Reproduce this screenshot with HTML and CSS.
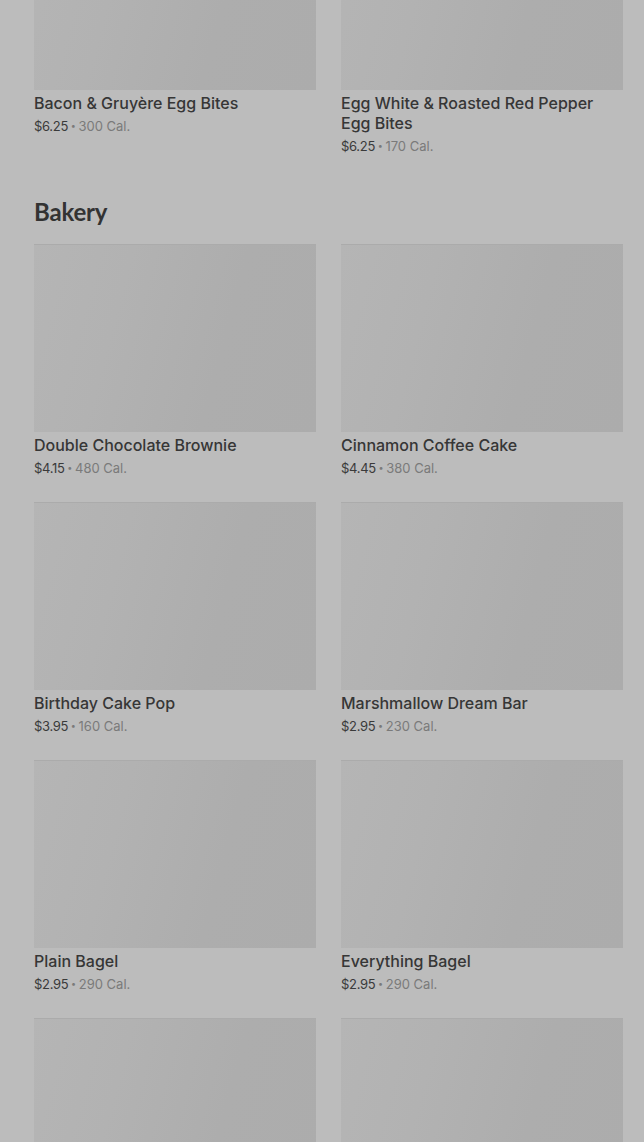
FILE: index.html
```html
<!DOCTYPE html>
<html lang="en">
<head>
  <meta charset="UTF-8">
  <meta name="viewport" content="width=device-width, initial-scale=1.0">
  <title>Menu</title>
  <link rel="stylesheet" href="styles.css">
</head>
<body>
  <div class="menu">
    <!-- Sezione precedente (tagliata in alto) -->
    <section class="section section-first">
      <div class="grid">
        <div class="item">
          <div class="thumb"></div>
          <div class="item-name">Bacon &amp; Gruyère Egg Bites</div>
          <div class="item-meta"><span class="price">$6.25</span> <span class="dot">•</span> 300 Cal.</div>
        </div>
        <div class="item">
          <div class="thumb"></div>
          <div class="item-name">Egg White &amp; Roasted Red Pepper Egg Bites</div>
          <div class="item-meta"><span class="price">$6.25</span> <span class="dot">•</span> 170 Cal.</div>
        </div>
      </div>
    </section>

    <section class="section">
      <h2 class="section-title">Bakery</h2>
      <div class="grid">
        <div class="item">
          <div class="thumb"></div>
          <div class="item-name">Double Chocolate Brownie</div>
          <div class="item-meta"><span class="price">$4.15</span> <span class="dot">•</span> 480 Cal.</div>
        </div>
        <div class="item">
          <div class="thumb"></div>
          <div class="item-name">Cinnamon Coffee Cake</div>
          <div class="item-meta"><span class="price">$4.45</span> <span class="dot">•</span> 380 Cal.</div>
        </div>
        <div class="item">
          <div class="thumb"></div>
          <div class="item-name">Birthday Cake Pop</div>
          <div class="item-meta"><span class="price">$3.95</span> <span class="dot">•</span> 160 Cal.</div>
        </div>
        <div class="item">
          <div class="thumb"></div>
          <div class="item-name">Marshmallow Dream Bar</div>
          <div class="item-meta"><span class="price">$2.95</span> <span class="dot">•</span> 230 Cal.</div>
        </div>
        <div class="item">
          <div class="thumb"></div>
          <div class="item-name">Plain Bagel</div>
          <div class="item-meta"><span class="price">$2.95</span> <span class="dot">•</span> 290 Cal.</div>
        </div>
        <div class="item">
          <div class="thumb"></div>
          <div class="item-name">Everything Bagel</div>
          <div class="item-meta"><span class="price">$2.95</span> <span class="dot">•</span> 290 Cal.</div>
        </div>
        <div class="item">
          <div class="thumb"></div>
        </div>
        <div class="item">
          <div class="thumb"></div>
        </div>
      </div>
    </section>
  </div>
</body>
</html>
```

FILE: styles.css
```css
body {
  margin: 0;
  background-color: #bcbcbc;
  font-family: Inter, "Noto Sans", sans-serif;
  color: #333;
  height: 1142px;
  overflow: hidden;
}
.menu {
  padding: 0 21px 0 34px;
}
.section-first {
  margin-top: -98px;
}
.section + .section {
  margin-top: 41px;
}
.section-title {
  margin: 0 0 17px;
  font-family: Lato, Inter, sans-serif;
  font-size: 24px;
  line-height: 30px;
  font-weight: 700;
  color: #333;
  letter-spacing: -0.2px;
}
.grid {
  display: grid;
  grid-template-columns: 1fr 1fr;
  column-gap: 25px;
  row-gap: 24px;
  align-items: start;
}
/* Scheda prodotto */
.thumb {
  height: 188px;
  background: linear-gradient(105deg, #b5b5b5 0%, #b2b2b2 30%, #adadad 65%, #acacac 100%);
  border-top: 1px solid #ababab;
  box-sizing: border-box;
}
.item-name {
  margin-top: 3px;
  font-size: 16px;
  line-height: 20px;
  font-weight: 500;
  color: #363636;
}
.item-meta {
  margin-top: 3px;
  font-size: 13px;
  line-height: 20px;
  height: 20px;
  color: #7a7a7a;
}
.price {
  color: #3a3a3a;
  letter-spacing: -0.3px;
}
.dot {
  font-size: 9px;
  line-height: 0;
  vertical-align: 2px;
  margin: 0 -1px;
}
```
